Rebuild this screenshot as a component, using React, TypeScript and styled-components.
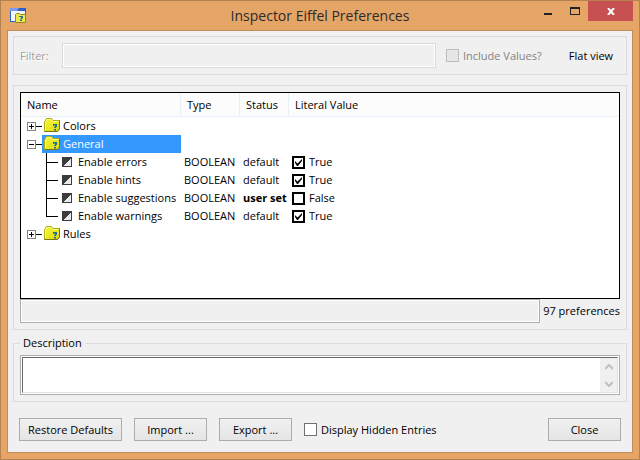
import React from "react";
import styled, { createGlobalStyle, css } from "styled-components";

const GlobalStyle = createGlobalStyle`
  * { box-sizing: border-box; }
  body { margin: 0; }
  body, button, input, textarea {
    font-family: "Open Sans", "Noto Sans", sans-serif;
    font-size: 11px;
    line-height: 18px;
    color: #000;
  }
`;

const Window = styled.div`
  display: flex;
  flex-direction: column;
  min-height: 100vh;
  padding: 0 6px 6px;
  border: 1px solid #b5814e;
  background: #e5a567;
`;

const TitleBar = styled.header`
  display: grid;
  grid-template-columns: 96px 1fr 96px;
  height: 29px;
`;

const AppIcon = styled.svg`
  margin: 7px 0 0 3px;
`;

const Title = styled.h1`
  margin: 0;
  font-size: 14px;
  font-weight: 400;
  line-height: 29px;
  text-align: center;
  white-space: nowrap;
  color: #2b2b2b;
`;

const WindowControls = styled.div`
  display: flex;
  justify-content: flex-end;
`;

const ControlButton = styled.button<{ $close?: boolean }>`
  display: flex;
  align-items: center;
  justify-content: center;
  flex: none;
  width: ${(p) => (p.$close ? 45 : 27)}px;
  height: 20px;
  padding: 0;
  border: 0;
  background: ${(p) => (p.$close ? "#c75050" : "transparent")};
`;

const Client = styled.main`
  display: flex;
  flex: 1;
  flex-direction: column;
  padding: 5px;
  border: 1px solid #c08c58;
  background: #f0f0f0;
`;

const Group = styled.section<{ $grow?: boolean }>`
  display: flex;
  flex-direction: column;
  margin-bottom: ${(p) => (p.$grow ? 4 : 10)}px;
  padding: 6px;
  border: 1px solid #dcdcdc;
  ${(p) => p.$grow && css`flex: 1;`}
`;

const FilterRow = styled.div`
  display: grid;
  grid-template-columns: 32px 1fr 106px 58px;
  gap: 10px;
  align-items: center;
  height: 25px;
`;

const FilterLabel = styled.label`
  color: #a0a0a0;
  text-shadow: 1px 1px 0 #fff;
`;

const FilterInput = styled.input`
  min-width: 0;
  height: 25px;
  padding: 0 4px;
  border: 1px solid #d9d9d9;
  outline: 1px solid #fff;
  outline-offset: -2px;
  background: #f0f0f0;
`;

const CheckLabel = styled.label<{ $muted?: boolean }>`
  display: flex;
  align-items: center;
  gap: 4px;
  white-space: nowrap;
  color: ${(p) => (p.$muted ? "#838383" : "#000")};
`;

const CheckBox = styled.input<{ $kind: "plain" | "cell" }>`
  appearance: none;
  flex: none;
  width: 13px;
  height: 13px;
  margin: 0;
  border: ${(p) => (p.$kind === "cell" ? "2px solid #000" : "1px solid #707070")};
  background: #fff;
  &:disabled { border-color: #bcbcbc; background: #e6e6e6; }
  &:checked {
    background: #fff url("data:image/svg+xml,%3Csvg xmlns='http://www.w3.org/2000/svg' viewBox='0 0 9 9'%3E%3Cpath d='M1 3v2l2 3h1l4-5V1L3.5 5.5z'/%3E%3C/svg%3E") center / 9px 9px no-repeat;
  }
`;

const FlatButton = styled.button`
  height: 25px;
  padding: 0;
  border: 0;
  background: transparent;
  white-space: nowrap;
`;

const TreeBox = styled.div`
  flex: 1;
  min-height: 120px;
  border: 1px solid #000;
  background: #fff;
`;

const Table = styled.table`
  width: 100%;
  table-layout: fixed;
  border-collapse: separate;
  border-spacing: 0;
`;

const HeadCell = styled.th<{ $width?: number }>`
  width: ${(p) => (p.$width ? `${p.$width}px` : "auto")};
  height: 24px;
  padding: 0 0 0 6px;
  border-bottom: 1px solid #e5f0fb;
  ${(p) => p.$width && css`border-right: 1px solid #e5f0fb;`}
  background: #fcfcfc;
  font-weight: 400;
  text-align: left;
`;

const Cell = styled.td<{ $strong?: boolean }>`
  height: 18px;
  padding: 0 0 0 3px;
  font-weight: ${(p) => (p.$strong ? 700 : 400)};
  white-space: nowrap;
`;

const TreeCell = styled.td`
  height: 18px;
  padding: 0 0 0 6px;
  white-space: nowrap;
`;

const Node = styled.div`
  display: flex;
  height: 18px;
`;

const NodeLabel = styled.span<{ $selected?: boolean }>`
  display: flex;
  flex: 1;
  gap: 2px;
  padding-left: 2px;
  background: ${(p) => (p.$selected ? "#3399ff" : "transparent")};
  color: ${(p) => (p.$selected ? "#fff" : "#000")};
`;

const Svg = styled.svg`
  display: block;
  flex: none;
`;

const StatusRow = styled.div`
  display: flex;
  align-items: center;
  gap: 3px;
`;

const StatusField = styled.output`
  flex: 1;
  height: 24px;
  border: 1px solid #abadb3;
  box-shadow: inset 0 0 0 1px #fff;
`;

const DescriptionGroup = styled.fieldset`
  min-width: 0;
  margin: 0 0 16px;
  padding: 3px 6px 6px;
  border: 1px solid #dcdcdc;
`;

const Legend = styled.legend`
  padding: 0 3px;
`;

const DescriptionFrame = styled.div`
  display: flex;
  height: 40px;
  padding: 1px;
  border: 1px solid #abadb3;
  background: #fff;
`;

const DescriptionText = styled.textarea`
  flex: 1;
  min-width: 0;
  padding: 2px;
  border: solid;
  border-width: 1px 0 1px 1px;
  border-color: #696969 #fff #e3e3e3 #696969;
  resize: none;
  outline: 0;
`;

const ScrollBar = styled.div`
  display: flex;
  flex-direction: column;
  width: 18px;
  border-top: 1px solid #696969;
  border-right: 1px solid #e3e3e3;
  border-bottom: 1px solid #e3e3e3;
  background: #f0f0f0;
`;

const ScrollButton = styled.button`
  display: flex;
  flex: 1;
  align-items: center;
  justify-content: center;
  padding: 0;
  border: 0;
  background: transparent;
`;

const Footer = styled.footer`
  display: flex;
  align-items: center;
  gap: 12px;
  padding: 0 6px;
  margin-bottom: 6px;
`;

const PushButton = styled.button<{ $wide?: boolean; $end?: boolean }>`
  width: ${(p) => (p.$wide ? 103 : 73)}px;
  height: 23px;
  padding: 0;
  border: 1px solid #acacac;
  background: linear-gradient(#f0f0f0, #e5e5e5);
  line-height: 18px;
  white-space: nowrap;
  ${(p) => p.$end && css`margin-left: auto;`}
`;

const Folder = () => (
  <Svg width="17" height="18" viewBox="0 0 17 18" aria-hidden="true">
    <defs>
      <linearGradient id="folder" x1="0" y1="0" x2="1" y2="1">
        <stop offset="0" stopColor="#f6f63c" />
        <stop offset="1" stopColor="#dedb08" />
      </linearGradient>
    </defs>
    <path d="M.5 5L2.5 1.5h5L9 3.5h6.500V12l-2 2.500H.5z" fill="url(#folder)" stroke="#b0ac14" />
    <path d="M15.500 3.500V12l-2 2.500H.5" fill="none" stroke="#77740c" />
    <path d="M1.500 13V5.500L3 2.500h4l1.500 2h6" fill="none" stroke="#fbfb8a" />
    <path d="M9 7h4v3h-1v1h-2v-1h1V8.500h-1V9H9zM10 12h2v1.500h-2z" fill="#1f6c98" />
  </Svg>
);

const Expander = ({ open }: { open?: boolean }) => (
  <Svg width="15" height="18" shapeRendering="crispEdges" aria-hidden="true">
    <rect x=".5" y="5.500" width="8" height="8" fill="#fff" stroke="#848484" />
    <path d={open ? "M2 9.500h5M9 9.500h6" : "M2 9.500h5M4.500 7v5M9 9.500h6"} stroke="#000" />
  </Svg>
);

const Leaf = ({ last }: { last: boolean }) => (
  <Svg width="51" height="18" shapeRendering="crispEdges" aria-hidden="true">
    <path d={last ? "M19.500 0v10M19 9.500h12" : "M19.500 0v18M19 9.500h12"} stroke="#000" />
    <rect x="35" y="4" width="10" height="10" fill="#3c3c3c" />
    <path d="M36 13L44 5v8z" fill="#e9e9ee" />
  </Svg>
);

const Branch = ({ name, open }: { name: string; open?: boolean }) => (
  <tr>
    <TreeCell>
      <Node>
        <Expander open={open} />
        <NodeLabel $selected={open}><Folder />{name}</NodeLabel>
      </Node>
    </TreeCell>
    <Cell /><Cell /><Cell />
  </tr>
);

const settings = [
  { name: "Enable errors", status: "default", on: true },
  { name: "Enable hints", status: "default", on: true },
  { name: "Enable suggestions", status: "user set", on: false },
  { name: "Enable warnings", status: "default", on: true },
];

export default function App() {
  return (
    <>
      <GlobalStyle />
      <Window>
        <TitleBar>
          <AppIcon width="17" height="17" viewBox="0 0 17 17" aria-hidden="true">
            <rect width="16" height="14" fill="#2c62c8" />
            <path d="M0 0h9L7 3H0z" fill="#7c9cf0" />
            <rect x="1" y="3" width="14" height="10" fill="#f4f4fc" />
            <path d="M5.500 14.500V6.500l1-1h3l1 1h5v8z" fill="#eaea50" stroke="#8c8a20" />
            <path d="M9 8h4v2.500h-1v1h-2v-1h1V9h-2zM10 12h2v1h-2z" fill="#2f6f88" />
          </AppIcon>
          <Title>Inspector Eiffel Preferences</Title>
          <WindowControls>
            <ControlButton aria-label="Minimize">
              <Svg width="8" height="8"><rect y="6" width="8" height="2" fill="#222" /></Svg>
            </ControlButton>
            <ControlButton aria-label="Maximize">
              <Svg width="10" height="8" shapeRendering="crispEdges"><path d="M0 0h10v8H0zM1 2v5h8V2z" fill="#222" fillRule="evenodd" /></Svg>
            </ControlButton>
            <ControlButton $close aria-label="Close window">
              <Svg width="8" height="7"><path d="M1 0l6 7M7 0L1 7" stroke="#fff" strokeWidth="2" /></Svg>
            </ControlButton>
          </WindowControls>
        </TitleBar>
        <Client>
          <Group>
            <FilterRow>
              <FilterLabel htmlFor="filter">Filter:</FilterLabel>
              <FilterInput id="filter" disabled />
              <CheckLabel $muted>
                <CheckBox type="checkbox" $kind="plain" disabled />
                Include Values?
              </CheckLabel>
              <FlatButton>Flat view</FlatButton>
            </FilterRow>
          </Group>
          <Group $grow>
            <TreeBox>
              <Table>
                <thead>
                  <tr>
                    <HeadCell $width={160}>Name</HeadCell>
                    <HeadCell $width={59}>Type</HeadCell>
                    <HeadCell $width={49}>Status</HeadCell>
                    <HeadCell>Literal Value</HeadCell>
                  </tr>
                </thead>
                <tbody>
                  <Branch name="Colors" />
                  <Branch name="General" open />
                  {settings.map((s, i) => (
                    <tr key={s.name}>
                      <TreeCell>
                        <Node><Leaf last={i === settings.length - 1} /><span>{s.name}</span></Node>
                      </TreeCell>
                      <Cell>BOOLEAN</Cell>
                      <Cell $strong={s.status === "user set"}>{s.status}</Cell>
                      <Cell>
                        <CheckLabel>
                          <CheckBox type="checkbox" $kind="cell" defaultChecked={s.on} />
                          {s.on ? "True" : "False"}
                        </CheckLabel>
                      </Cell>
                    </tr>
                  ))}
                  <Branch name="Rules" />
                </tbody>
              </Table>
            </TreeBox>
            <StatusRow>
              <StatusField />
              <span>97 preferences</span>
            </StatusRow>
          </Group>
          <DescriptionGroup>
            <Legend>Description</Legend>
            <DescriptionFrame>
              <DescriptionText aria-label="Description" readOnly />
              <ScrollBar>
                <ScrollButton aria-label="Scroll up">
                  <Svg width="8" height="6"><path d="M0 5l4-4 4 4" fill="none" stroke="#bfbfbf" strokeWidth="2" /></Svg>
                </ScrollButton>
                <ScrollButton aria-label="Scroll down">
                  <Svg width="8" height="6"><path d="M0 1l4 4 4-4" fill="none" stroke="#bfbfbf" strokeWidth="2" /></Svg>
                </ScrollButton>
              </ScrollBar>
            </DescriptionFrame>
          </DescriptionGroup>
          <Footer>
            <PushButton $wide>Restore Defaults</PushButton>
            <PushButton>Import ...</PushButton>
            <PushButton>Export ...</PushButton>
            <CheckLabel>
              <CheckBox type="checkbox" $kind="plain" />
              Display Hidden Entries
            </CheckLabel>
            <PushButton $end>Close</PushButton>
          </Footer>
        </Client>
      </Window>
    </>
  );
}
